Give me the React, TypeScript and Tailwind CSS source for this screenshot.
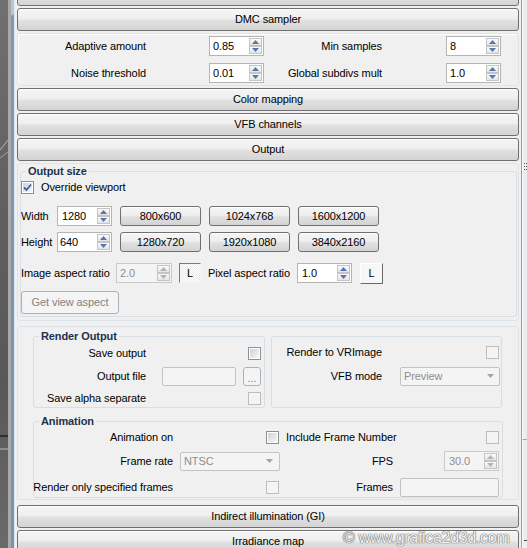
import React from 'react';

const btnGrad =
  'bg-[linear-gradient(to_bottom,#f5f5f5_0%,#efefef_45%,#e0e0e0_55%,#d4d4d4_100%)]';

function Rollout({ label, className = '' }: { label: string; className?: string }) {
  return (
    <div
      className={`h-[23px] shrink-0 rounded-[3px] border border-[#707070] ${btnGrad} shadow-[inset_0_1px_0_#ffffff] flex items-center justify-center text-black ${className}`}
    >
      {label}
    </div>
  );
}

function PushButton({ label, className = '' }: { label: string; className?: string }) {
  return (
    <div
      className={`h-[20px] shrink-0 rounded-[3px] border border-[#707070] ${btnGrad} shadow-[inset_0_1px_0_#ffffff] flex items-center justify-center text-black ${className}`}
    >
      {label}
    </div>
  );
}

function Arrow({ up, disabled }: { up: boolean; disabled?: boolean }) {
  const c = disabled ? '#b4b4b4' : '#5676ad';
  return (
    <div className="h-[8px] border border-[#c4c4c4] bg-linear-to-b from-[#fbfbfb] to-[#e4e4e4] flex items-center justify-center">
      <svg width="7" height="4" viewBox="0 0 7 4">
        {up ? <path d="M3.5 0L7 4H0Z" fill={c} /> : <path d="M0 0H7L3.5 4Z" fill={c} />}
      </svg>
    </div>
  );
}

function Spinner({
  value,
  w = 'w-[55px]',
  disabled = false,
  pl = 'pl-[3px]',
  className = '',
}: {
  value: string;
  w?: string;
  disabled?: boolean;
  pl?: string;
  className?: string;
}) {
  return (
    <div
      className={`h-[20px] shrink-0 flex items-stretch border ${
        disabled ? 'border-[#cacaca] bg-[#f4f4f4] text-[#8d8d8d]' : 'border-[#b5b5b5] bg-white text-black'
      } ${w} ${className}`}
    >
      <span className={`flex-1 flex items-center ${pl}`}>{value}</span>
      <div className="flex flex-col w-[13px] my-[1px] mr-[1px]">
        <Arrow up disabled={disabled} />
        <Arrow up={false} disabled={disabled} />
      </div>
    </div>
  );
}

function Check({ checked = false, dim = false, className = '' }: { checked?: boolean; dim?: boolean; className?: string }) {
  return (
    <div
      className={`w-[13px] h-[13px] shrink-0 border ${
        dim ? 'border-[#bcbcbc] bg-[#f6f6f6]' : 'border-[#8e8f8f] bg-white'
      } p-[1px] ${className}`}
    >
      <div
        className={`w-full h-full flex items-center justify-center ${
          dim ? 'bg-[#f4f4f4]' : 'bg-linear-to-br from-[#cfd3d8] to-[#f7f7f7]'
        }`}
      >
        {checked && (
          <svg width="9" height="9" viewBox="0 0 9 9">
            <path d="M1 4.5L3.5 7L8 1.5" stroke="#3c5ea5" strokeWidth="1.8" fill="none" />
          </svg>
        )}
      </div>
    </div>
  );
}

function Combo({ value, w, arrowMr = 'mr-[5px]' }: { value: string; w: string; arrowMr?: string }) {
  return (
    <div
      className={`h-[19px] shrink-0 ${w} rounded-[2px] border border-[#c3c3c3] bg-[#f4f4f4] flex items-center pl-[3px] text-[#8d8d8d]`}
    >
      <span className="flex-1">{value}</span>
      <svg width="7" height="4" viewBox="0 0 7 4" className={arrowMr}>
        <path d="M0 0H7L3.5 4Z" fill="#a3a3a3" />
      </svg>
    </div>
  );
}

function TextBox({ w }: { w: string }) {
  return <div className={`h-[19px] shrink-0 ${w} rounded-[2px] border border-[#c3c3c3] bg-[#f4f4f4]`} />;
}

function Label({ children, w }: { children: React.ReactNode; w: string }) {
  return <div className={`${w} shrink-0 flex justify-end whitespace-nowrap`}>{children}</div>;
}

const groupBorder = 'border border-[#d5dfe5] rounded-[3px]';
const legendCls = 'ml-[5px] px-[2px] font-bold leading-[14px] text-[#22304d]';

function LeftStrip() {
  return (
    <div className="w-[15px] h-full shrink-0 flex">
      <div className="relative w-[8px] h-full bg-[linear-gradient(to_bottom,#707070_0%,#5f5f5f_40%,#585858_70%,#6a6a6a_100%)]">
        <svg className="absolute left-0 top-0" width="8" height="548" viewBox="0 0 8 548">
          <path d="M0 150L8 140" stroke="#c8c8c8" strokeWidth="0.8" />
          <path d="M0 158L8 152" stroke="#b0b0b0" strokeWidth="0.8" />
          <path d="M0 436H8" stroke="#111" strokeWidth="1.2" />
          <path d="M0 449H8" stroke="#d0d0d0" strokeWidth="0.8" />
        </svg>
      </div>
      <div className="w-[3px] h-full bg-[#a9a9a9]" />
      <div className="w-[3px] h-full bg-[linear-gradient(to_bottom,#b9c7d5_0px,#b9c7d5_14px,#8299b0_16px,#7a92aa_100%)]" />
      <div className="w-[1px] h-full bg-[#dfe6ec]" />
    </div>
  );
}

function RightBar() {
  return (
    <div className="relative w-[6px] h-full shrink-0 flex flex-col border-l border-[#9d9d9d] bg-[#ededed]">
      <div className="h-[440px] shrink-0 border-b border-[#a6a6a6] border-l border-l-[#fafafa]" />
      <div className="flex-1 border-l border-l-[#fafafa]" />
      <svg className="absolute left-[2px] top-[163px]" width="3" height="10" viewBox="0 0 3 10">
        <rect x="0" y="0" width="1" height="1" fill="#555" />
        <rect x="2" y="0" width="1" height="1" fill="#555" />
        <rect x="0" y="3" width="1" height="1" fill="#555" />
        <rect x="2" y="3" width="1" height="1" fill="#555" />
        <rect x="0" y="6" width="1" height="1" fill="#555" />
        <rect x="2" y="6" width="1" height="1" fill="#555" />
      </svg>
      <div className="absolute left-[2px] top-[540px] w-[3px] h-[1px] bg-[#444]" />
    </div>
  );
}

export default function App() {
  return (
    <div className="relative w-[527px] h-[548px] overflow-hidden flex text-[11px] leading-[13px] tracking-[-0.1px] text-black font-['Liberation_Sans',Arial,sans-serif] bg-[#f0f0f0]">
      <LeftStrip />
      <div className="w-[506px] h-full shrink-0 bg-[#f0f0f0] px-[2px] flex flex-col">
        <Rollout label="" className="-mt-[17px]" />
        <Rollout label="DMC sampler" className="mt-[2px]" />

        {/* DMC content */}
        <div className="mt-[2px] h-[53px] shrink-0 rounded-[3px] border border-[#dce3e9] shadow-[inset_1px_1px_0_#ffffff] flex flex-col pt-[2px] gap-[7px]">
          <div className="flex items-center h-[20px]">
            <Label w="w-[128px]">Adaptive amount</Label>
            <Spinner value="0.85" className="ml-[63px]" />
            <Label w="w-[118px]">Min samples</Label>
            <Spinner value="8" className="ml-[64px]" />
          </div>
          <div className="flex items-center h-[20px]">
            <Label w="w-[128px]">Noise threshold</Label>
            <Spinner value="0.01" className="ml-[63px]" />
            <Label w="w-[118px]">Global subdivs mult</Label>
            <Spinner value="1.0" className="ml-[64px]" />
          </div>
        </div>

        <Rollout label="Color mapping" className="mt-[2px]" />
        <Rollout label="VFB channels" className="mt-[2px]" />
        <Rollout label="Output" className="mt-[2px]" />

        {/* Output size */}
        <div className="mt-[2px] shrink-0 rounded-[3px] border border-[#dce3e9] pl-[2px] pr-[1px] pb-[3px]">
          <fieldset className={`${groupBorder} pb-[2px]`}>
            <legend className={legendCls}>Output size</legend>
            <div className="flex items-center h-[18px]">
              <Check checked />
              <span className="ml-[7px]">Override viewport</span>
            </div>
            <div className="flex items-center h-[20px] mt-[10px]">
              <span className="w-[36px] shrink-0">Width</span>
              <Spinner value="1280" pl="pl-[4px]" />
              <PushButton label="800x600" className="w-[81px] ml-[8px]" />
              <PushButton label="1024x768" className="w-[81px] ml-[8px]" />
              <PushButton label="1600x1200" className="w-[81px] ml-[8px]" />
            </div>
            <div className="flex items-center h-[20px] mt-[6px]">
              <span className="w-[36px] shrink-0">Height</span>
              <Spinner value="640" pl="pl-[2px]" />
              <PushButton label="1280x720" className="w-[81px] ml-[8px]" />
              <PushButton label="1920x1080" className="w-[81px] ml-[8px]" />
              <PushButton label="3840x2160" className="w-[81px] ml-[8px]" />
            </div>
            <div className="flex items-center h-[20px] mt-[11px]">
              <span className="w-[95px] shrink-0 whitespace-nowrap">Image aspect ratio</span>
              <Spinner value="2.0" w="w-[56px]" disabled />
              <div className="ml-[7px] w-[22px] h-[20px] shrink-0 flex items-center justify-center border border-t-[#7a7a7a] border-l-[#7a7a7a] border-r-[#f4f4f4] border-b-[#f4f4f4] bg-[repeating-conic-gradient(#ffffff_0_25%,#ebebeb_0_50%)] bg-[length:2px_2px]">
                L
              </div>
              <span className="ml-[7px] w-[89px] shrink-0 whitespace-nowrap">Pixel aspect ratio</span>
              <Spinner value="1.0" pl="pl-[4px]" />
              <div className="ml-[8px] w-[23px] h-[21px] shrink-0 flex items-center justify-center border border-t-[#ffffff] border-l-[#ffffff] border-r-[#696969] border-b-[#696969] bg-[#f7f7f7]">
                L
              </div>
            </div>
            <div className="mt-[8px] w-[98px] h-[23px] rounded-[3px] border border-[#adb2b5] bg-[#f4f4f4] flex items-center justify-center text-[#838383]">
              Get view aspect
            </div>
          </fieldset>
        </div>

        {/* Render output + Animation */}
        <div className="mt-[5px] shrink-0 rounded-[3px] border border-[#dce3e9] pt-[2px] pb-[1px]">
          <div className="flex ml-[15px] gap-[6px]">
            <fieldset className={`${groupBorder} w-[232px]`}>
              <legend className={legendCls}>Render Output</legend>
              <div className="flex items-center h-[20px]">
                <Label w="w-[112px]">Save output</Label>
                <div className="ml-[16px] w-[99px] flex justify-end">
                  <Check />
                </div>
              </div>
              <div className="flex items-center h-[20px] mt-[3px]">
                <Label w="w-[112px]">Output file</Label>
                <div className="ml-[16px] w-[99px] flex items-center">
                  <TextBox w="w-[74px]" />
                  <div className="ml-[7px] w-[18px] h-[19px] rounded-[3px] border border-[#adb2b5] bg-[#f4f4f4] flex items-end justify-center pb-[3px] text-[#838383] leading-[8px]">
                    ...
                  </div>
                </div>
              </div>
              <div className="flex items-center h-[18px] mt-[3px]">
                <Label w="w-[112px]">Save alpha separate</Label>
                <div className="ml-[16px] w-[99px] flex justify-end">
                  <Check dim />
                </div>
              </div>
            </fieldset>
            <div className={`${groupBorder} w-[231px] h-[72px] mt-[7px] pt-[5px]`}>
              <div className="flex items-center h-[20px]">
                <Label w="w-[110px]">Render to VRImage</Label>
                <div className="ml-[18px] w-[99px] flex justify-end">
                  <Check dim />
                </div>
              </div>
              <div className="flex items-center h-[20px] mt-[4px]">
                <Label w="w-[110px]">VFB mode</Label>
                <div className="ml-[18px]">
                  <Combo value="Preview" w="w-[100px]" arrowMr="mr-[5px]" />
                </div>
              </div>
            </div>
          </div>

          <fieldset className={`${groupBorder} ml-[15px] w-[470px] mt-[6px]`}>
            <legend className={legendCls}>Animation</legend>
            <div className="flex items-center h-[18px]">
              <Label w="w-[139px]">Animation on</Label>
              <div className="ml-[7px] w-[100px] flex justify-end">
                <Check className="mr-[1px]" />
              </div>
              <div className="w-[113px] pl-[6px] whitespace-nowrap">Include Frame Number</div>
              <div className="ml-[7px] w-[99px] flex justify-end">
                <Check dim />
              </div>
            </div>
            <div className="flex items-center h-[20px] mt-[5px]">
              <Label w="w-[139px]">Frame rate</Label>
              <div className="ml-[7px] w-[100px]">
                <Combo value="NTSC" w="w-[100px]" arrowMr="mr-[6px]" />
              </div>
              <Label w="w-[113px]">FPS</Label>
              <div className="ml-[7px] w-[99px] flex justify-end">
                <Spinner value="30.0" disabled pl="pl-[4px]" />
              </div>
            </div>
            <div className="flex items-center h-[20px] mt-[6px]">
              <Label w="w-[139px]">Render only specified frames</Label>
              <div className="ml-[7px] w-[100px] flex justify-end">
                <Check dim className="mr-[1px]" />
              </div>
              <Label w="w-[113px]">Frames</Label>
              <div className="ml-[7px] w-[99px]">
                <TextBox w="w-[99px]" />
              </div>
            </div>
          </fieldset>
        </div>

        <Rollout label="Indirect illumination (GI)" className="mt-[5px]" />
        <Rollout label="Irradiance map" className="mt-[2px]" />
      </div>
      <RightBar />

      <div className="absolute left-[343px] top-[528px] text-[16px] leading-[20px] tracking-[-0.3px] whitespace-nowrap text-[#f4f4f4] [text-shadow:0_0_1px_#6a6a6a,0_0_1px_#6a6a6a,0_0_1px_#6a6a6a] font-['Liberation_Sans',Arial,sans-serif]">
        © www.grafica2d3d.com
      </div>
    </div>
  );
}
